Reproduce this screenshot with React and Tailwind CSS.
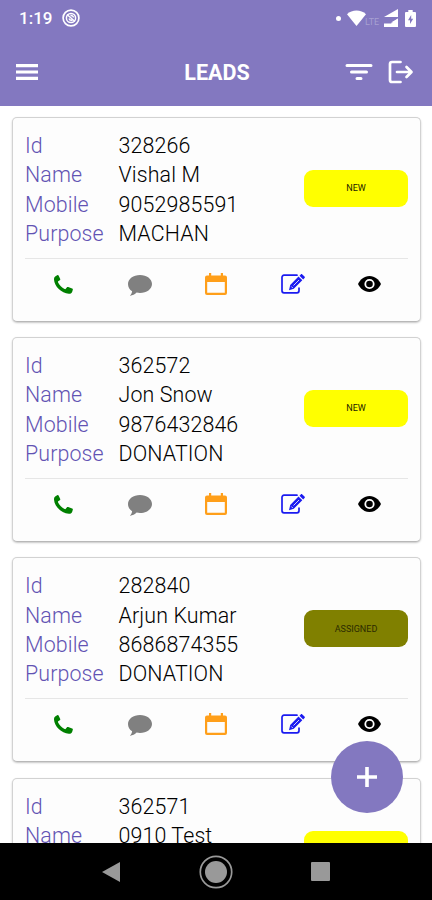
const LEADS = [
  { id: "328266", name: "Vishal M", mobile: "9052985591", purpose: "MACHAN", status: "NEW" },
  { id: "362572", name: "Jon Snow", mobile: "9876432846", purpose: "DONATION", status: "NEW" },
  { id: "282840", name: "Arjun Kumar", mobile: "8686874355", purpose: "DONATION", status: "ASSIGNED" },
  { id: "362571", name: "0910 Test", status: "NEW" },
];

const STATUS_STYLES = {
  NEW: "bg-[#ffff00] text-[#222200]",
  ASSIGNED: "bg-[#808000] text-[#2b2b00]",
};

export default function App() {
  return (
    <div className="relative flex h-[900px] w-[432px] flex-col overflow-hidden bg-white font-[Roboto,sans-serif]">
      <header className="h-[106px] shrink-0 bg-[#8378c0] text-white">
        <StatusBar />
        <div className="flex h-[71px] items-center pr-[18px] pl-4">
          <div className="flex w-[73px]">
            <MenuIcon />
          </div>
          <h1 className="flex-1 pt-[3px] text-center text-[21.5px] font-bold">LEADS</h1>
          <div className="flex w-[69px] items-center justify-between">
            <FilterIcon />
            <LogoutIcon />
          </div>
        </div>
      </header>

      <main className="flex min-h-0 flex-1 flex-col gap-[15.2px] overflow-hidden pt-[11px] pr-[11px] pl-3">
        {LEADS.map((lead) => <LeadCard key={lead.id} lead={lead} />)}
      </main>

      <NavBar />

      <button className="absolute top-[741px] left-[331px] flex size-[72px] items-center justify-center rounded-full bg-[#8378c0]">
        <svg width="22" height="22" viewBox="0 0 22 22" stroke="#fff" strokeWidth="3.6">
          <path d="M11 1v20M1 11h20" />
        </svg>
      </button>
    </div>
  );
}

const StatusBar = () => (
  <div className="flex h-9 items-center pr-[16px] pl-[19px]">
    <span className="pt-px text-[17px] font-medium">1:19</span>
    <svg className="ml-[10px]" width="18" height="18" viewBox="0 0 18 18" fill="none" stroke="#fff">
      <circle cx="9" cy="9" r="7.9" strokeWidth="1.7" />
      <circle cx="9" cy="9" r="4.6" strokeWidth="1.5" />
      <path d="M5 5.5l8 7M7 9.5c.5 1.6 2 2 3.400 1.600M8.500 6.500c1.400-.3 2.800.5 3 2" strokeWidth="1.4" />
    </svg>
    <div className="ml-auto flex items-center">
      <span className="size-[5px] rounded-full bg-white" />
      <svg className="ml-[6px]" width="19" height="16" viewBox="0 0 19 16" fill="#fff">
        <path d="M9.500 16L0 4.200C5-.8 14-.8 19 4.200z" />
      </svg>
      <span className="mt-2 -ml-px w-[19px] text-[9px] leading-none text-white/30">LTE</span>
      <svg width="15" height="18" viewBox="0 0 15 18" fill="#fff">
        <path d="M14 0v8H0zM14 9.500V18H0v-3.500h7z" />
        <path d="M7 13.500l7-4v4z" />
      </svg>
      <svg className="ml-[6px]" width="11" height="17" viewBox="0 0 11 17">
        <path fill="#fff" d="M3.300 0h4.400v2H10a1 1 0 0 1 1 1v13a1 1 0 0 1-1 1H1a1 1 0 0 1-1-1V3a1 1 0 0 1 1-1h2.300z" />
        <path fill="#8378c0" d="M6.200 5L3 10.200h2V14l3.200-5.200h-2z" />
      </svg>
    </div>
  </div>
);

const LeadCard = ({ lead }) => (
  <article className="h-[205px] shrink-0 rounded-[5px] border border-[#d2d2d2] border-b-[#b8b8b8] bg-[#fdfdfd] px-3 pt-[13px] shadow-[0_1px_2px_rgba(0,0,0,0.22)]">
    <div className="flex h-[128px] items-start justify-between border-b border-[#e6e6e6]">
      <dl className="grid grid-cols-[93.5px_1fr] text-[21.4px] leading-[29.3px] font-light tracking-[0.12px] whitespace-nowrap">
        <Field label="Id" value={lead.id} />
        <Field label="Name" value={lead.name} />
        {lead.mobile && <Field label="Mobile" value={lead.mobile} />}
        {lead.purpose && <Field label="Purpose" value={lead.purpose} />}
      </dl>
      <span className={`mt-[39px] flex h-[37px] w-[104px] items-center justify-center rounded-[9px] pt-px text-[9px] ${STATUS_STYLES[lead.status]}`}>
        {lead.status}
      </span>
    </div>
    <div className="grid h-[50px] grid-cols-5 place-items-center">
      <PhoneIcon />
      <CommentIcon />
      <CalendarIcon />
      <EditIcon />
      <EyeIcon />
    </div>
  </article>
);

const Field = ({ label, value }) => (
  <>
    <dt className="text-[#6253b3]">{label}</dt>
    <dd className="text-black">{value}</dd>
  </>
);

const MenuIcon = () => (
  <svg width="22" height="18" viewBox="0 0 22 18" fill="#fff">
    <path d="M0 1h22v3.200H0zM0 7.400h22v3.200H0zM0 13.800h22V17H0z" />
  </svg>
);

const FilterIcon = () => (
  <svg width="28" height="18" viewBox="0 0 28 18" stroke="#fff" strokeWidth="3" strokeLinecap="round">
    <path d="M2 2.500h24M6.500 9h15M12 15.500h4" />
  </svg>
);

const LogoutIcon = () => (
  <svg width="26" height="24" viewBox="0 0 26 24" fill="none" stroke="#fff" strokeWidth="2.700" strokeLinecap="round" strokeLinejoin="round">
    <path d="M12.500 2H4a2 2 0 0 0-2 2v16a2 2 0 0 0 2 2h8.500M9 12h14M18.500 7l5 5-5 5" />
  </svg>
);

const PhoneIcon = () => (
  <svg width="19" height="19" viewBox="0 0 19 19" fill="#008000">
    <path d="M1.500 1.200L3.200.2c.6-.3 1.100-.2 1.400.4l1.500 3.200c.3.600.2 1-.3 1.400L4.200 6.300c-.3.300-.3.600-.1 1.100 1.500 3 3.600 5.100 6.500 6.600.5.200.9.200 1.200-.2l1-1.300c.4-.5.9-.6 1.400-.4l3.900 1.300c.6.200.9.700.7 1.300l-.5 1.700c-.4 1.500-1.700 2.400-3.500 2.300C7.500 18.200.3 11.500 0 4.500c-.1-1.500.4-2.600 1.500-3.300z" />
  </svg>
);

const CommentIcon = () => (
  <svg className="mt-[3px]" width="24" height="21" viewBox="0 0 24 21" fill="#808080">
    <path d="M12 0c6.700 0 12 3.900 12 9s-5.300 9-12 9c-1.200 0-2.300-.1-3.400-.4-1.700 1.700-3.900 2.900-6.700 3.300 1.200-1.300 2-2.700 2.200-4.600C1.600 14.700 0 12 0 9c0-5.100 5.300-9 12-9z" />
  </svg>
);

const CalendarIcon = () => (
  <svg width="22" height="22" viewBox="0 0 22 22" fill="#ff9f1a">
    <path fillRule="evenodd" d="M4 0h2.200v2.500h9.600V0H18v2.500h2a2 2 0 0 1 2 2V20a2 2 0 0 1-2 2H2a2 2 0 0 1-2-2V4.500a2 2 0 0 1 2-2h2zM2.200 9v10.700h17.600V9z" />
  </svg>
);

const EditIcon = () => (
  <svg width="24" height="20" viewBox="0 0 24 20">
    <path fill="none" stroke="#1b1bf0" strokeWidth="1.700" strokeLinecap="round" d="M16 1.200H3a2 2 0 0 0-2 2v13.600a2 2 0 0 0 2 2h13a2 2 0 0 0 2-2V14" />
    <path fill="#1b1bf0" d="M17.500 2.500l3.800 3.800-8.500 8.500-4.800 1.400 1.200-5.200zM18.500 1.700L19.800.4c.5-.5 1-.5 1.500 0l2.200 2.200c.5.500.5 1 0 1.500l-1.300 1.300z" />
    <path stroke="#fff" strokeWidth=".8" d="M12.500 11.500l5.500-5.500M10.300 12.500l1.500 1.500" />
  </svg>
);

const EyeIcon = () => (
  <svg width="23" height="16" viewBox="0 0 23 16">
    <path d="M11.500 0C17 0 21 3.800 23 8c-2 4.200-6 8-11.500 8S2 12.200 0 8c2-4.200 6-8 11.500-8z" />
    <circle cx="11.500" cy="8" r="4.200" fill="none" stroke="#fff" strokeWidth="1.800" />
  </svg>
);

const NavBar = () => (
  <nav className="grid h-[57px] shrink-0 grid-cols-[104.5px_1fr_104.5px] items-center bg-black px-[59px]">
    <svg className="justify-self-center" width="18" height="20" viewBox="0 0 18 20" fill="#999">
      <path d="M18 0v20L0 10z" />
    </svg>
    <svg className="justify-self-center" width="34" height="34" viewBox="0 0 34 34">
      <circle cx="17" cy="17" r="15.700" fill="none" stroke="#999" strokeWidth="1.700" />
      <circle cx="17" cy="17" r="11" fill="#999" />
    </svg>
    <span className="size-[19px] justify-self-center rounded-[1px] bg-[#999]" />
  </nav>
);
